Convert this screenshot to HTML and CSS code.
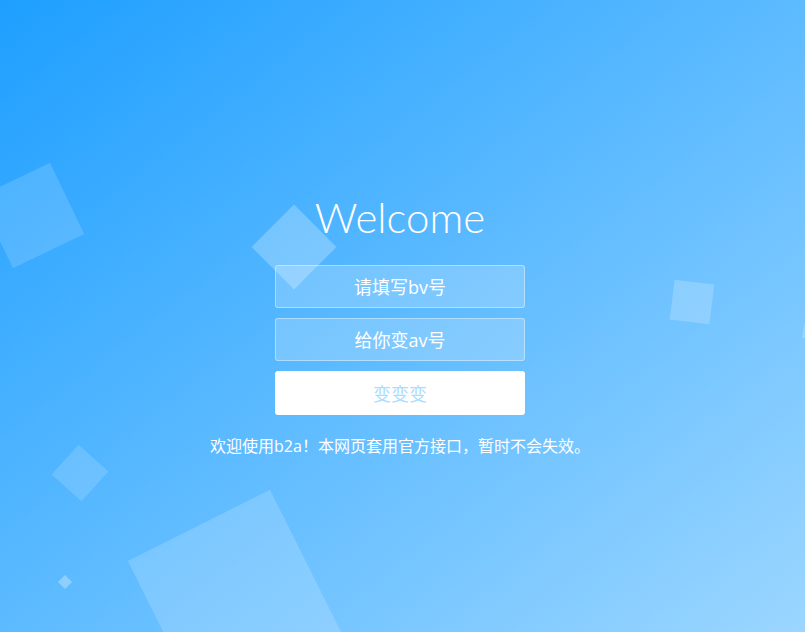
FILE: index.html
```html
<!DOCTYPE html>
<html lang="zh-CN">
<head>
<meta charset="utf-8">
<title>b2a</title>
<link rel="stylesheet" href="styles.css">
</head>
<body>
<div class="page">
  <ul class="bubbles" aria-hidden="true">
    <li class="sq sq1"></li>
    <li class="sq sq2"></li>
    <li class="sq sq3"></li>
    <li class="sq sq4"></li>
    <li class="sq sq5"></li>
    <li class="sq sq6"></li>
    <li class="sq sq7"></li>
  </ul>
  <main class="panel">
    <h1 class="title">Welcome</h1>
    <form class="form">
      <input class="field" type="text" placeholder="请填写bv号">
      <input class="field" type="text" placeholder="给你变av号">
      <button class="go" type="button">变变变</button>
    </form>
    <p class="note">欢迎使用b2a！本网页套用官方接口，暂时不会失效。</p>
  </main>
</div>
</body>
</html>
```
FILE: styles.css
```css
* { box-sizing: border-box; }
html, body { margin: 0; padding: 0; }
body {
  font-family: "Open Sans", "Noto Sans CJK SC", sans-serif;
}
.page {
  position: relative;
  width: 100%;
  height: 100vh;
  overflow: hidden;
  background: linear-gradient(to bottom right, #1e9fff 0%, #9bd6ff 100%);
}
.bubbles {
  position: absolute;
  inset: 0;
  margin: 0;
  padding: 0;
  list-style: none;
  z-index: 0;
}
.sq {
  position: absolute;
  background: rgba(255, 255, 255, 0.15);
}
.sq1 { left: -8px; top: 176px; width: 79px; height: 79px; transform: rotate(-25.6deg); }
.sq2 { left: 264px; top: 217px; width: 60px; height: 60px; transform: rotate(45deg); background: rgba(255,255,255,0.25); }
.sq3 { left: 672px; top: 282px; width: 40px; height: 40px; transform: rotate(7deg); background: rgba(255,255,255,0.2); }
.sq4 { left: 60px; top: 453px; width: 40px; height: 40px; transform: rotate(42deg); background: rgba(255,255,255,0.15); }
.sq5 { left: 60px; top: 577px; width: 10px; height: 10px; transform: rotate(45deg); background: rgba(255,255,255,0.3); }
.sq6 { left: 155px; top: 517px; width: 159px; height: 159px; transform: rotate(-26.6deg); background: rgba(255,255,255,0.17); }
.sq7 { left: 803px; top: 325px; width: 14px; height: 14px; transform: rotate(10deg); background: rgba(255,255,255,0.2); }

.panel {
  position: relative;
  z-index: 1;
  display: flex;
  flex-direction: column;
  align-items: center;
  padding-top: 192px;
  padding-right: 5px;
  color: #fff;
}
.title {
  margin: 0;
  font-family: "Lato", "Open Sans", sans-serif;
  font-weight: 300;
  font-size: 42px;
  line-height: 50px;
  letter-spacing: 0;
}
.form {
  display: flex;
  flex-direction: column;
  align-items: center;
  gap: 10px;
  margin-top: 23px;
}
.field {
  display: block;
  width: 250px;
  height: 43px;
  padding: 0 15px;
  margin: 0;
  border: 1px solid rgba(255, 255, 255, 0.4);
  background: rgba(255, 255, 255, 0.2);
  border-radius: 3px;
  outline: 0;
  text-align: center;
  font-family: "Open Sans", "Noto Sans CJK SC", sans-serif;
  font-size: 18px;
  color: #fff;
}
.field::placeholder { color: #fff; opacity: 1; }
.go {
  width: 250px;
  height: 44px;
  padding: 0 15px;
  border: 0;
  border-radius: 3px;
  background: #fff;
  color: #a9dcff;
  font-family: "Noto Sans CJK SC", sans-serif;
  font-size: 18px;
  cursor: pointer;
}
.note {
  margin: 20px 0 0;
  font-family: "Open Sans", "Noto Sans CJK SC", sans-serif;
  font-size: 16px;
  line-height: 22px;
  color: #fff;
}
```
